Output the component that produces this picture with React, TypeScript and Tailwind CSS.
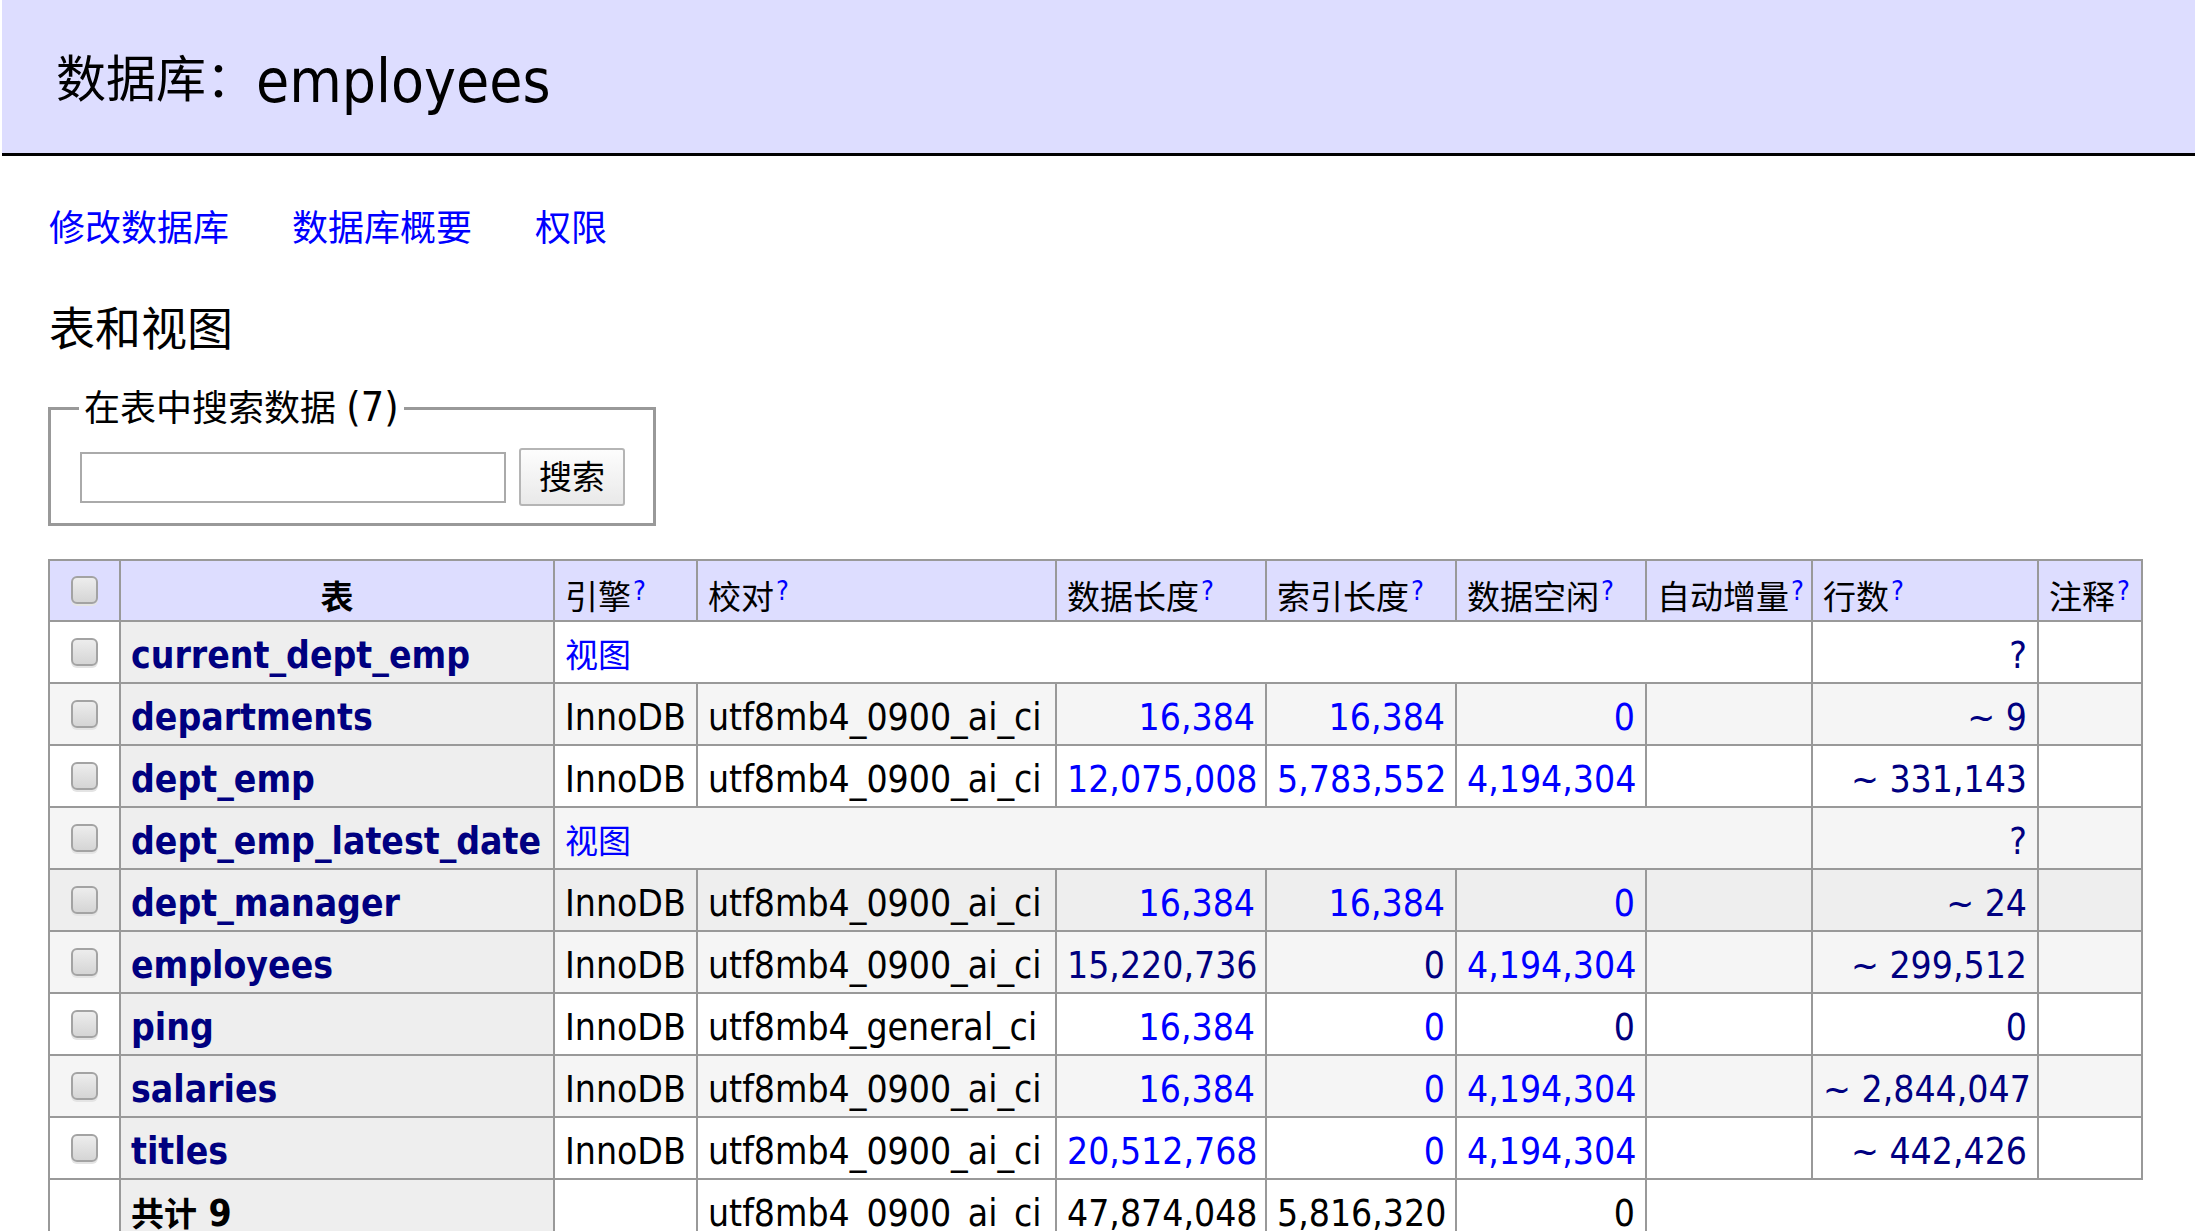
import React from "react";

type Tone = "b" | "n" | "k";
type Row = {
  name: string;
  view?: boolean;
  engine?: string;
  coll?: string;
  nums?: [string, Tone][];
  count: string;
  hover?: boolean;
};

const rows: Row[] = [
  { name: "current_dept_emp", view: true, count: "?" },
  {
    name: "departments",
    engine: "InnoDB",
    coll: "utf8mb4_0900_ai_ci",
    nums: [["16,384", "b"], ["16,384", "b"], ["0", "b"]],
    count: "~ 9",
  },
  {
    name: "dept_emp",
    engine: "InnoDB",
    coll: "utf8mb4_0900_ai_ci",
    nums: [["12,075,008", "b"], ["5,783,552", "b"], ["4,194,304", "b"]],
    count: "~ 331,143",
  },
  { name: "dept_emp_latest_date", view: true, count: "?" },
  {
    name: "dept_manager",
    engine: "InnoDB",
    coll: "utf8mb4_0900_ai_ci",
    nums: [["16,384", "b"], ["16,384", "b"], ["0", "b"]],
    count: "~ 24",
    hover: true,
  },
  {
    name: "employees",
    engine: "InnoDB",
    coll: "utf8mb4_0900_ai_ci",
    nums: [["15,220,736", "n"], ["0", "n"], ["4,194,304", "b"]],
    count: "~ 299,512",
  },
  {
    name: "ping",
    engine: "InnoDB",
    coll: "utf8mb4_general_ci",
    nums: [["16,384", "b"], ["0", "b"], ["0", "n"]],
    count: "0",
  },
  {
    name: "salaries",
    engine: "InnoDB",
    coll: "utf8mb4_0900_ai_ci",
    nums: [["16,384", "b"], ["0", "b"], ["4,194,304", "b"]],
    count: "~ 2,844,047",
  },
  {
    name: "titles",
    engine: "InnoDB",
    coll: "utf8mb4_0900_ai_ci",
    nums: [["20,512,768", "b"], ["0", "b"], ["4,194,304", "b"]],
    count: "~ 442,426",
  },
];

const toneClass: Record<Tone, string> = {
  b: "text-[#0000ff]",
  n: "text-[#000080]",
  k: "text-black",
};

function Box() {
  return (
    <span className="relative -top-[2px] inline-block w-[27px] h-[28px] rounded-[6px] border-2 border-[#a3a3a3] bg-linear-to-b from-[#ededed] to-[#d5d5d5] shadow-[0_2px_0_#e4e4e4] align-middle" />
  );
}

function Q() {
  return <sup className="text-[#0000ff] text-[27px] relative -top-[9px] ml-[2px]">?</sup>;
}

// cells: borders + padding shared
const cell = "border-2 border-[#999] px-[10px] whitespace-nowrap";
const box = `${cell} py-0 h-[62px] text-center`;
const td = `${cell} pt-[8px] pb-0 h-[62px]`;
const hd = `${cell} pt-[14px] pb-0 h-[61px] text-[33px] font-normal`;

export default function App() {
  return (
    <div className="min-h-screen bg-white text-black font-['DejaVu_Sans_Condensed','DejaVu_Sans','Noto_Sans_CJK_SC',sans-serif] pb-12">
      <h2 className="ml-[2px] h-[156px] bg-[#ddf] border-b-[3px] border-black flex items-center pl-[54px] pt-[8px] text-[60px] font-normal">
        <span className="text-[50px]">数据库：</span>employees
      </h2>

      <p className="mt-[53px] ml-[49px] flex gap-[63px] text-[36px] leading-[40px] text-[#0000ff]">
        <a href="#">修改数据库</a>
        <a href="#">数据库概要</a>
        <a href="#">权限</a>
      </p>

      <h3 className="mt-[54px] ml-[49px] text-[46px] leading-[52px] font-normal">表和视图</h3>

      <fieldset className="mt-[32px] ml-[48px] w-[608px] border-[3px] border-[#999] pl-[29px] pb-[17px]">
        <legend className="-ml-[1px] px-[5px] text-[36px] leading-[40px]">
          在表中搜索数据 <span className="text-[41px]">(7)</span>
        </legend>
        <div className="mt-[19px] flex items-center gap-[13px]">
          <input className="w-[426px] h-[51px] border-2 border-[#aaa] bg-white outline-none" />
          <button className="w-[106px] h-[58px] border-2 border-[#b5b5b5] rounded-[3px] bg-linear-to-b from-[#fdfdfd] to-[#e9e9e9] text-[33px] leading-none">
            搜索
          </button>
        </div>
      </fieldset>

      <table className="mt-[33px] ml-[48px] w-[2095px] table-fixed border-collapse text-[37px] leading-[40px]">
        <colgroup>
          <col className="w-[71px]" />
          <col className="w-[434px]" />
          <col className="w-[143px]" />
          <col className="w-[359px]" />
          <col className="w-[210px]" />
          <col className="w-[190px]" />
          <col className="w-[190px]" />
          <col className="w-[166px]" />
          <col className="w-[226px]" />
          <col className="w-[104px]" />
        </colgroup>
        <thead className="bg-[#ddf]">
          <tr>
            <td className={`${cell} py-0 h-[61px] text-center`}>
              <Box />
            </td>
            <th className={`${cell} pt-[14px] pb-0 h-[61px] text-[33px] text-center font-bold`}>表</th>
            <td className={hd}>
              引擎<Q />
            </td>
            <td className={hd}>
              校对<Q />
            </td>
            <td className={hd}>
              数据长度<Q />
            </td>
            <td className={hd}>
              索引长度<Q />
            </td>
            <td className={hd}>
              数据空闲<Q />
            </td>
            <td className={hd}>
              自动增量<Q />
            </td>
            <td className={hd}>
              行数<Q />
            </td>
            <td className={hd}>
              注释<Q />
            </td>
          </tr>
        </thead>
        <tbody>
          {rows.map((r, i) => {
            const bg = r.hover ? "bg-[#eee]" : i % 2 === 1 ? "bg-[#f5f5f5]" : "bg-white";
            return (
              <tr key={r.name} className={bg}>
                <td className={box}>
                  <Box />
                </td>
                <th className={`${td} bg-[#eee] text-left font-bold text-[#000080]`}>{r.name}</th>
                {r.view ? (
                  <td colSpan={6} className={`${td} text-[33px] text-[#0000ff]`}>
                    视图
                  </td>
                ) : (
                  <>
                    <td className={td}>{r.engine}</td>
                    <td className={td}>{r.coll}</td>
                    {r.nums!.map(([v, t], k) => (
                      <td key={k} className={`${td} text-right ${toneClass[t]}`}>
                        {v}
                      </td>
                    ))}
                    <td className={td}></td>
                  </>
                )}
                <td className={`${td} text-right text-[#000080]`}>{r.count}</td>
                <td className={td}></td>
              </tr>
            );
          })}
          <tr className="bg-white">
            <td className={box}></td>
            <th className={`${td} bg-[#eee] text-left font-bold`}>
              <span className="text-[33px]">共计</span> 9
            </th>
            <td className={td}></td>
            <td className={td}>utf8mb4_0900_ai_ci</td>
            <td className={`${td} text-right`}>47,874,048</td>
            <td className={`${td} text-right`}>5,816,320</td>
            <td className={`${td} text-right`}>0</td>
          </tr>
        </tbody>
      </table>
    </div>
  );
}
